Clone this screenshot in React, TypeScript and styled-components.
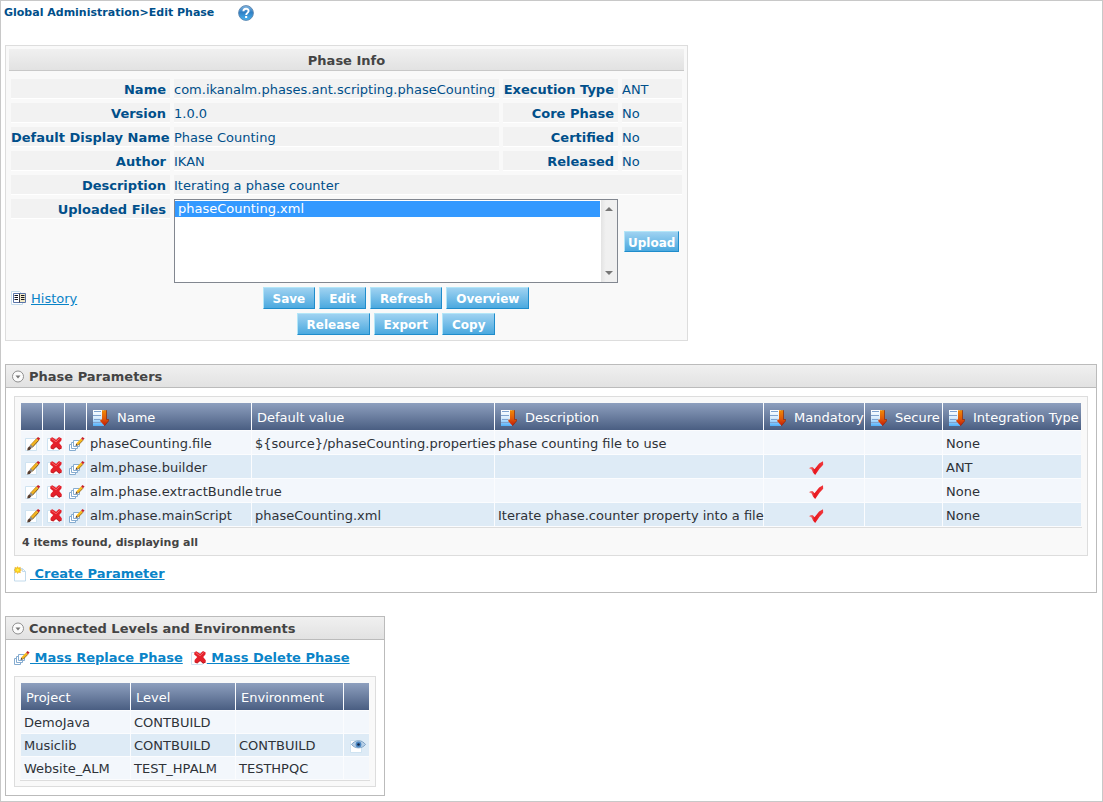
import React from "react";
import styled, { createGlobalStyle, css } from "styled-components";

const GlobalStyle = createGlobalStyle`
  *, *::before, *::after { box-sizing: border-box; }
  body {
    margin: 0;
    background: #fff;
    font-family: Verdana, "DejaVu Sans", sans-serif;
    font-size: 13px;
    line-height: 16px;
    color: #2e3238;
  }
`;

const Page = styled.main`
  min-height: 100vh;
  border: 1px solid #c8c8c8;
  padding: 4px 5px 4px 4px;
`;

const Breadcrumb = styled.header`
  display: flex;
  align-items: center;
  gap: 24px;
  height: 16px;
  margin-left: -1px;
`;

const Crumbs = styled.h1`
  margin: 0;
  font-size: 11px;
  line-height: 16px;
  color: #004f8a;
`;

const IconButton = styled.button`
  display: block;
  width: 16px;
  height: 16px;
  padding: 0;
  border: 0;
  background: none;
  cursor: pointer;
`;

/* Phase info */
const InfoPanel = styled.section`
  width: 683px;
  max-width: 100%;
  margin-top: 24px;
  padding: 3px;
  border: 1px solid #ddd;
  background: #f9f9f9;
`;

const barFill = css`
  background: linear-gradient(#f0f0f0, #e2e2e2);
  color: #444;
`;

const InfoTitle = styled.h2`
  ${barFill}
  margin: 0;
  height: 22px;
  border-bottom: 1px solid #c8c8c8;
  font-size: 13px;
  line-height: 24px;
  text-align: center;
`;

const InfoGrid = styled.div`
  display: grid;
  grid-template-columns: 159px 1fr 115px 60px;
  gap: 4px;
  padding: 8px 2px 0;
`;

const cell = css`
  height: 20px;
  border-bottom: 1px solid #fff;
  background: #f2f2f2;
  line-height: 22px;
  color: #004f8a;
  white-space: nowrap;
`;

const Label = styled.label`
  ${cell}
  display: block;
  padding-right: 4px;
  font-weight: bold;
  text-align: right;
`;

const Value = styled.output<{ $wide?: boolean }>`
  ${cell}
  display: block;
  grid-column: ${(p) => (p.$wide ? "span 3" : "auto")};
`;

const FileBox = styled.div`
  grid-column: span 2;
  display: flex;
  height: 84px;
  border: 1px solid #828790;
  background: #fff;
`;

const FileList = styled.select`
  flex: 1;
  min-width: 0;
  margin: 0;
  padding: 1px 1px 0 0;
  border: 0;
  outline: 0;
  border-radius: 0;
  background: #fff;
  font: inherit;
  overflow: hidden;

  option {
    min-height: 16px;
    padding: 0 3px;
    line-height: 16px;
  }
  option:checked {
    background: #3399ff linear-gradient(#3399ff, #3399ff);
    color: #fff;
  }
`;

const ScrollTrack = styled.div`
  display: flex;
  flex-direction: column;
  justify-content: space-between;
  align-items: center;
  width: 16px;
  padding: 6px 0;
  background: linear-gradient(90deg, #e3e3e3, #f0f0f0 30%);
`;

const UploadCell = styled.div`
  display: flex;
  align-items: center;
  padding-left: 2px;
`;

const Button = styled.button<{ $compact?: boolean }>`
  height: ${(p) => (p.$compact ? 21 : 22)}px;
  padding: 2px ${(p) => (p.$compact ? 3 : 9)}px 0;
  border: 1px solid;
  border-color: #b3e6f8 #1f8ccb #1f8ccb #b3e6f8;
  background: linear-gradient(#9fd2f1, #4ba9df);
  font: bold 12px/18px Verdana, "DejaVu Sans", sans-serif;
  color: #fff;
  cursor: pointer;
`;

const InfoFooter = styled.div`
  display: grid;
  grid-template-columns: 95px 1fr;
  gap: 4px;
  padding: 4px 2px 2px;
`;

const Actions = styled.div`
  display: flex;
  flex-direction: column;
  gap: 4px;
`;

const ActionRow = styled.div`
  display: flex;
  justify-content: center;
  gap: 4px;
`;

const Link = styled.a<{ $strong?: boolean }>`
  color: #0a84c8;
  font-weight: ${(p) => (p.$strong ? "bold" : "normal")};
  text-decoration: underline;
  white-space: pre;
`;

const LinkItem = styled.div`
  display: flex;
  align-items: center;
  height: 20px;
`;

const HistoryItem = styled(LinkItem)`
  gap: 4px;
  height: 24px;
`;

const CreateItem = styled(LinkItem)`
  margin-top: 8px;
`;

/* Collapsible panels */
const Panel = styled.section<{ $width?: number }>`
  width: ${(p) => (p.$width ? `${p.$width}px` : "auto")};
  max-width: 100%;
  margin-top: 23px;
  border: 1px solid #bbb;
  background: #fff;
`;

const PanelHeader = styled.div`
  ${barFill}
  display: flex;
  align-items: center;
  gap: 3px;
  height: 23px;
  padding-left: 4px;
  border-bottom: 1px solid #bbb;
`;

const PanelTitle = styled.h2`
  margin: 0;
  height: 22px;
  font-size: 13px;
  line-height: 24px;
`;

const PanelBody = styled.div`
  padding: 8px;
`;

const LinkBar = styled.div`
  display: flex;
  gap: 8px;
  height: 28px;
`;

const TableBox = styled.div`
  padding: 6px 5px 5px;
  border: 1px solid #ddd;
  background: #f9f9f9;
`;

const TableRule = styled.div`
  border-bottom: 1px solid #ddd;
  padding: 0 1px;
`;

const DataTable = styled.table<{ $row: number }>`
  width: 100%;
  table-layout: fixed;
  border-collapse: separate;
  border-spacing: 0;
  white-space: nowrap;

  th, td {
    padding: 2px 0 0 3px;
    border-right: 1px solid #fbfcfe;
    border-bottom: 1px solid #fbfcfe;
    text-align: left;
    font-weight: normal;
  }
  th {
    height: 28px;
    padding-left: 5px;
    background: linear-gradient(#8d9fbe, #4a5e82);
    color: #fff;
  }
  td { height: ${(p) => p.$row}px; background: #f3f7fc; }
  tbody tr:nth-child(even) td { background: #deebf6; }
  th:last-child, td:last-child { border-right: 0; }
`;

const Centered = styled.span`
  display: flex;
  justify-content: center;
`;

const SortHead = styled.span`
  display: flex;
  align-items: center;
  gap: 8px;
`;

const Summary = styled.p`
  margin: 8px 0 0;
  padding: 0 2px;
  font-size: 11px;
  line-height: 14px;
  font-weight: bold;
  color: #444;
`;

/* Icons */
const Svg = styled.svg`
  display: block;
  flex: none;
`;

const Sheet = () => <path d="M.5 2.500h11v12H.5z" fill="#fff" stroke="#cfe3f1" />;

const EditIcon = () => (
  <Svg width="16" height="16" viewBox="0 0 16 16">
    <Sheet />
    <path d="m5 9.500 6.500-7 2.200 1.900-6.500 7.100z" fill="#f2b31f" />
    <path d="m7.200 11.500 6.500-7.100" stroke="#6d4a14" strokeWidth=".9" />
    <path d="m5.500 9 6-6.500" stroke="#a8761a" strokeWidth=".6" />
    <path d="M11.500 2.500 13 .9l2.200 1.700-1.500 1.800z" fill="#c8242b" />
    <path d="m4.200 10.200 1.600-1.700 2.200 2-1.500 1.600z" fill="#8c8c8c" />
    <path d="M4.300 10.200 6.500 12l-1.700 2-2.600.4.500-2.400z" fill="#553c2e" />
  </Svg>
);

const DeleteIcon = () => (
  <Svg width="16" height="16" viewBox="0 0 16 16">
    <Sheet />
    <path
      d="M3.400 2.300 5.300 1.200l3.800 2.600 2.900-2.700 2.700 1.300-.3 2.200-2.200 2.400 2.600 3.200-.2 2.200-2.400 1-3.100-2.600-2.900 2.500-2.600-1V10l2.600-3L3.200 4.400z"
      fill="#e4202a"
    />
    <path d="m3.800 12 2.400 1 2.900-2.400 3.100 2.500 2.200-.9" fill="none" stroke="#b3141c" strokeWidth=".8" />
    <path d="m4.600 2.600 4.500 3.200 3.500-3.300" fill="none" stroke="#f4696d" strokeWidth=".9" />
  </Svg>
);

const CopyEditIcon = () => (
  <Svg width="16" height="16" viewBox="0 0 16 16">
    <g fill="#fff" stroke="#86acd0">
      <path d="M.5 8.500h6v6h-6z" />
      <path d="M2.500 6.500h6v6h-6z" />
      <path d="M4.500 4.500h6v6h-6z" />
    </g>
    <path d="m7.200 7.500 4.900-5 1.900 1.800-4.900 5z" fill="#f6b81c" />
    <path d="m9.100 9.300 4.900-5" stroke="#8a5c12" strokeWidth=".8" />
    <path d="m12.100 2.500 1.400-1.500 2.100 1.600L14 4.300z" fill="#c8242b" />
    <path d="m7.200 7.500 1.900 1.800-2.500.8z" fill="#57402c" />
  </Svg>
);

const SortIcon = () => (
  <Svg width="17" height="18" viewBox="0 0 17 18">
    <defs>
      <linearGradient id="sheetFill" x1="0" y1="0" x2="0" y2="1">
        <stop offset="0" stopColor="#fff" />
        <stop offset=".5" stopColor="#d8ecfd" />
        <stop offset="1" stopColor="#4fb0fb" />
      </linearGradient>
      <linearGradient id="arrowFill" x1="0" y1="0" x2="0" y2="1">
        <stop offset="0" stopColor="#ef8a08" />
        <stop offset=".55" stopColor="#e05808" />
        <stop offset="1" stopColor="#c41a08" />
      </linearGradient>
    </defs>
    <path d="M1 1h11v16H1z" fill="url(#sheetFill)" />
    <path d="M2 2.500h7M1 6.500h8M2 10.500h6M1 13.500h8" stroke="#7fa3cf" />
    <path d="M10 1.200h4.500v9.300h2.200v1.300L12.500 16.800l-4.200-4.600v-1.700H10z" fill="url(#arrowFill)" />
    <path d="M14.500 1.200v9.300h2.200v1.300l-4.200 5" fill="none" stroke="#8e2a08" strokeWidth=".7" />
  </Svg>
);

const CheckIcon = () => (
  <Svg width="16" height="16" viewBox="0 0 16 16">
    <defs>
      <linearGradient id="checkFill">
        <stop offset="0" stopColor="#f6a3a0" />
        <stop offset=".4" stopColor="#e8151c" />
        <stop offset="1" stopColor="#f0383c" />
      </linearGradient>
    </defs>
    <path d="m.8 8.300 2-1.200 2 .2 1.700 2 4.600-5.700L15 1.200l.2 3.500-3.700 4L7.200 15l-2.100-2.300-1.500-3.200z" fill="url(#checkFill)" />
  </Svg>
);

const HelpIcon = () => (
  <Svg width="16" height="16" viewBox="0 0 16 16">
    <defs>
      <linearGradient id="helpFill" x1="0" y1="0" x2="0" y2="1">
        <stop offset="0" stopColor="#86b9e4" />
        <stop offset=".45" stopColor="#2f7fc4" />
        <stop offset="1" stopColor="#49b4f0" />
      </linearGradient>
    </defs>
    <circle cx="8" cy="8" r="7.400" fill="url(#helpFill)" stroke="#5c84ad" strokeWidth=".9" />
    <path d="M5.400 6.200c0-3.300 5.200-3.300 5.200-.2 0 1.900-2.400 1.900-2.400 4" fill="none" stroke="#fff" strokeWidth="1.900" />
    <path d="M7.100 11h2.100v2H7.100z" fill="#fff" />
  </Svg>
);

const HistoryIcon = () => (
  <Svg width="16" height="16" viewBox="0 0 16 16">
    <path d="M.5.500h8l3 3v10H.5z" fill="#fff" stroke="#c3dbec" />
    <path d="M2.500 2.500h12v9h-12z" fill="#f1e8c8" stroke="#5a74a8" />
    <path d="M3 3h5v8H3z" fill="#fff" />
    <path d="M3.500 4.500H7M3.500 6.500H7M3.500 8.500H7M10 4.500h3.500M10 6.500h3.500M10 8.500h3.500" stroke="#15151c" />
    <path d="M8.500 2.500v9" stroke="#3c3c46" />
  </Svg>
);

const NewIcon = () => (
  <Svg width="16" height="16" viewBox="0 0 16 16">
    <path d="M.5 2.500h8l3 3v9.500H.5z" fill="#fff" stroke="#c3dbec" />
    <path d="M8.500 2.500v3h3" fill="none" stroke="#c3dbec" />
    <path d="m3.600.6.9 1.500 1.900-.8L6 3.100l1.600.9L6 5l.4 1.700-1.800-.5-1 1.400-.9-1.500-1.900.5L1.400 5 0 4l1.500-.9L.9 1.300l1.800.7z" fill="#fbd21d" stroke="#e8a520" strokeWidth=".5" />
    <circle cx="3.700" cy="4" r="1.200" fill="#fff04a" />
  </Svg>
);

const ViewIcon = () => (
  <Svg width="16" height="16" viewBox="0 0 16 16">
    <Sheet />
    <path d="M1.500 6.500C5 1.500 12 1.500 15.500 6.500 12 11 5 11 1.500 6.500z" fill="#b7cfe6" stroke="#6d95bd" strokeWidth=".8" />
    <circle cx="8.500" cy="6.500" r="2.900" fill="#4a86c2" />
    <circle cx="8.500" cy="6.500" r="1.300" fill="#12294a" />
  </Svg>
);

const CollapseIcon = () => (
  <Svg width="16" height="16" viewBox="0 0 16 16">
    <circle cx="8" cy="8.500" r="5.500" fill="#fbfbfb" stroke="#8f8f8f" />
    <path d="M5.500 7.500h5L8 10.500z" fill="#777" />
  </Svg>
);

const Arrow = ({ up }: { up?: boolean }) => (
  <Svg width="8" height="5" viewBox="0 0 8 5">
    <path d={up ? "M0 5h8L4 1z" : "M0 0h8L4 4z"} fill="#777" />
  </Svg>
);

const fields = [
  ["Name", "com.ikanalm.phases.ant.scripting.phaseCounting"],
  ["Execution Type", "ANT"],
  ["Version", "1.0.0"],
  ["Core Phase", "No"],
  ["Default Display Name", "Phase Counting"],
  ["Certified", "No"],
  ["Author", "IKAN"],
  ["Released", "No"],
  ["Description", "Iterating a phase counter"],
];

const params = [
  { name: "phaseCounting.file", value: "${source}/phaseCounting.properties", text: "phase counting file to use", mandatory: false, type: "None" },
  { name: "alm.phase.builder", value: "", text: "", mandatory: true, type: "ANT" },
  { name: "alm.phase.extractBundle", value: "true", text: "", mandatory: true, type: "None" },
  { name: "alm.phase.mainScript", value: "phaseCounting.xml", text: "Iterate phase.counter property into a file", mandatory: true, type: "None" },
];

const levels = [
  { project: "DemoJava", level: "CONTBUILD", env: "", view: false },
  { project: "Musiclib", level: "CONTBUILD", env: "CONTBUILD", view: true },
  { project: "Website_ALM", level: "TEST_HPALM", env: "TESTHPQC", view: false },
];

const SortableTh = ({ children }: { children: React.ReactNode }) => (
  <th scope="col">
    <SortHead>
      <SortIcon />
      {children}
    </SortHead>
  </th>
);

const IconCell = ({ label, children }: { label: string; children: React.ReactNode }) => (
  <td>
    <Centered>
      <IconButton aria-label={label}>{children}</IconButton>
    </Centered>
  </td>
);

export default function App() {
  return (
    <Page>
      <GlobalStyle />
      <Breadcrumb>
        <Crumbs>Global Administration&gt;Edit Phase</Crumbs>
        <IconButton aria-label="Help">
          <HelpIcon />
        </IconButton>
      </Breadcrumb>

      <InfoPanel>
        <InfoTitle>Phase Info</InfoTitle>
        <InfoGrid>
          {fields.map(([label, value]) => {
            const id = label.toLowerCase().replace(/ /g, "-");
            return (
              <React.Fragment key={id}>
                <Label htmlFor={id}>{label}</Label>
                <Value id={id} $wide={label === "Description"}>
                  {value}
                </Value>
              </React.Fragment>
            );
          })}
          <Label htmlFor="files">Uploaded Files</Label>
          <FileBox>
            <FileList id="files" size={5} defaultValue="phaseCounting.xml">
              <option>phaseCounting.xml</option>
            </FileList>
            <ScrollTrack>
              <Arrow up />
              <Arrow />
            </ScrollTrack>
          </FileBox>
          <UploadCell>
            <Button $compact>Upload</Button>
          </UploadCell>
        </InfoGrid>
        <InfoFooter>
          <HistoryItem>
            <HistoryIcon />
            <Link href="#history">History</Link>
          </HistoryItem>
          <Actions>
            <ActionRow>
              <Button>Save</Button>
              <Button>Edit</Button>
              <Button>Refresh</Button>
              <Button>Overview</Button>
            </ActionRow>
            <ActionRow>
              <Button>Release</Button>
              <Button>Export</Button>
              <Button>Copy</Button>
            </ActionRow>
          </Actions>
        </InfoFooter>
      </InfoPanel>

      <Panel>
        <PanelHeader>
          <IconButton aria-label="Collapse phase parameters">
            <CollapseIcon />
          </IconButton>
          <PanelTitle>Phase Parameters</PanelTitle>
        </PanelHeader>
        <PanelBody>
          <TableBox>
            <TableRule>
              <DataTable $row={24}>
                <colgroup>
                  <col width="22" />
                  <col width="22" />
                  <col width="22" />
                  <col width="165" />
                  <col width="243" />
                  <col />
                  <col width="101" />
                  <col width="78" />
                  <col width="138" />
                </colgroup>
                <thead>
                  <tr>
                    <th />
                    <th />
                    <th />
                    <SortableTh>Name</SortableTh>
                    <th scope="col">Default value</th>
                    <SortableTh>Description</SortableTh>
                    <SortableTh>Mandatory</SortableTh>
                    <SortableTh>Secure</SortableTh>
                    <SortableTh>Integration Type</SortableTh>
                  </tr>
                </thead>
                <tbody>
                  {params.map((p) => (
                    <tr key={p.name}>
                      <IconCell label="Edit">
                        <EditIcon />
                      </IconCell>
                      <IconCell label="Delete">
                        <DeleteIcon />
                      </IconCell>
                      <IconCell label="Copy and edit">
                        <CopyEditIcon />
                      </IconCell>
                      <td>{p.name}</td>
                      <td>{p.value}</td>
                      <td>{p.text}</td>
                      <td>{p.mandatory && <Centered><CheckIcon /></Centered>}</td>
                      <td />
                      <td>{p.type}</td>
                    </tr>
                  ))}
                </tbody>
              </DataTable>
            </TableRule>
            <Summary>4 items found, displaying all</Summary>
          </TableBox>
          <CreateItem>
            <NewIcon />
            <Link href="#create" $strong>{" Create Parameter"}</Link>
          </CreateItem>
        </PanelBody>
      </Panel>

      <Panel $width={380}>
        <PanelHeader>
          <IconButton aria-label="Collapse connected levels">
            <CollapseIcon />
          </IconButton>
          <PanelTitle>Connected Levels and Environments</PanelTitle>
        </PanelHeader>
        <PanelBody>
          <LinkBar>
            <LinkItem>
              <CopyEditIcon />
              <Link href="#replace" $strong>{" Mass Replace Phase"}</Link>
            </LinkItem>
            <LinkItem>
              <DeleteIcon />
              <Link href="#delete" $strong>{" Mass Delete Phase"}</Link>
            </LinkItem>
          </LinkBar>
          <TableBox>
            <TableRule>
              <DataTable $row={23}>
                <colgroup>
                  <col width="110" />
                  <col width="105" />
                  <col />
                  <col width="25" />
                </colgroup>
                <thead>
                  <tr>
                    <th scope="col">Project</th>
                    <th scope="col">Level</th>
                    <th scope="col">Environment</th>
                    <th />
                  </tr>
                </thead>
                <tbody>
                  {levels.map((l) => (
                    <tr key={l.project}>
                      <td>{l.project}</td>
                      <td>{l.level}</td>
                      <td>{l.env}</td>
                      {l.view ? (
                        <IconCell label="View">
                          <ViewIcon />
                        </IconCell>
                      ) : (
                        <td />
                      )}
                    </tr>
                  ))}
                </tbody>
              </DataTable>
            </TableRule>
          </TableBox>
        </PanelBody>
      </Panel>
    </Page>
  );
}
